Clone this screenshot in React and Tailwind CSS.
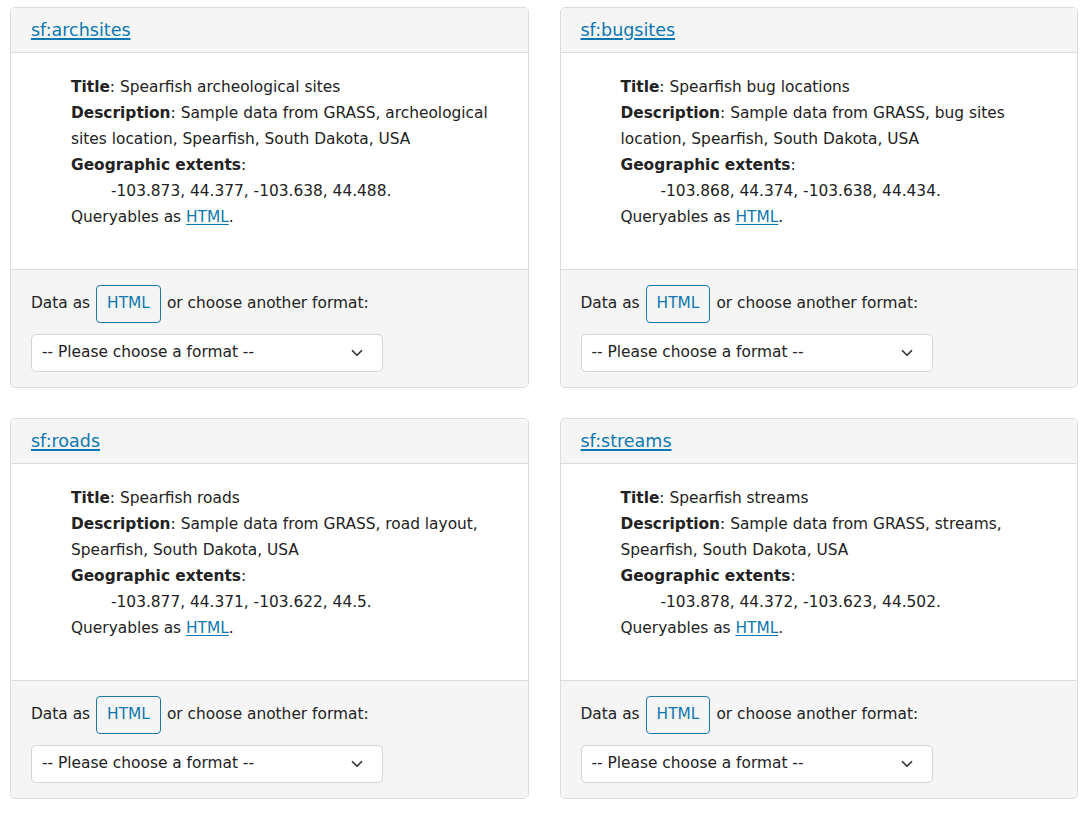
import { ChevronDown } from 'lucide-react';

const layers = [
  {
    name: 'sf:archsites',
    title: 'Spearfish archeological sites',
    description: 'Sample data from GRASS, archeological sites location, Spearfish, South Dakota, USA',
    extents: '-103.873, 44.377, -103.638, 44.488.',
  },
  {
    name: 'sf:bugsites',
    title: 'Spearfish bug locations',
    description: 'Sample data from GRASS, bug sites location, Spearfish, South Dakota, USA',
    extents: '-103.868, 44.374, -103.638, 44.434.',
  },
  {
    name: 'sf:roads',
    title: 'Spearfish roads',
    description: 'Sample data from GRASS, road layout, Spearfish, South Dakota, USA',
    extents: '-103.877, 44.371, -103.622, 44.5.',
  },
  {
    name: 'sf:streams',
    title: 'Spearfish streams',
    description: 'Sample data from GRASS, streams, Spearfish, South Dakota, USA',
    extents: '-103.878, 44.372, -103.623, 44.502.',
  },
];

const LayerCard = ({ layer }) => (
  <div className="flex flex-col border border-[#dcdcdc] rounded-[5px] overflow-hidden bg-white">
    <div className="bg-[#f5f5f5] border-b border-[#dcdcdc] px-5 h-[45px] flex items-center">
      <a href="#" className="text-[17.5px] text-[#0d78b0] underline underline-offset-2 decoration-2">{layer.name}</a>
    </div>
    <div className="flex-1 pt-[21px] pb-[39px] pl-[60px] pr-5 text-[15.4px] leading-[26px] text-[#222]">
      <div><b>Title</b>: {layer.title}</div>
      <div><b>Description</b>: {layer.description}</div>
      <div><b>Geographic extents</b>:</div>
      <div className="pl-10">{layer.extents}</div>
      <div>
        Queryables as <a href="#" className="text-[#0d78b0] underline underline-offset-2">HTML</a>.
      </div>
    </div>
    <div className="bg-[#f5f5f5] border-t border-[#dcdcdc] px-5 pt-[15px] pb-[15px] text-[15.4px] text-[#222]">
      <div className="flex items-center gap-[6px]">
        <span>Data as</span>
        <button className="h-[38px] px-[10px] border border-[#1a78ad] rounded-[4px] text-[#0d78b0] bg-transparent">HTML</button>
        <span>or choose another format:</span>
      </div>
      <div className="mt-[11px] w-[352px] h-[38px] bg-white border border-[#d5d5d5] rounded-[5px] flex items-center justify-between pl-[10px] pr-4">
        <span>-- Please choose a format --</span>
        <ChevronDown size={18} strokeWidth={2.25} className="text-[#333]" />
      </div>
    </div>
  </div>
);

export default function App() {
  return (
    <div className="min-h-screen bg-white pt-[7px] pl-[10px] pr-[12px] font-['DejaVu_Sans',sans-serif]">
      <div className="grid grid-cols-2 gap-x-[31px] gap-y-[30px]">
        {layers.map((layer) => (
          <LayerCard key={layer.name} layer={layer} />
        ))}
      </div>
    </div>
  );
}
